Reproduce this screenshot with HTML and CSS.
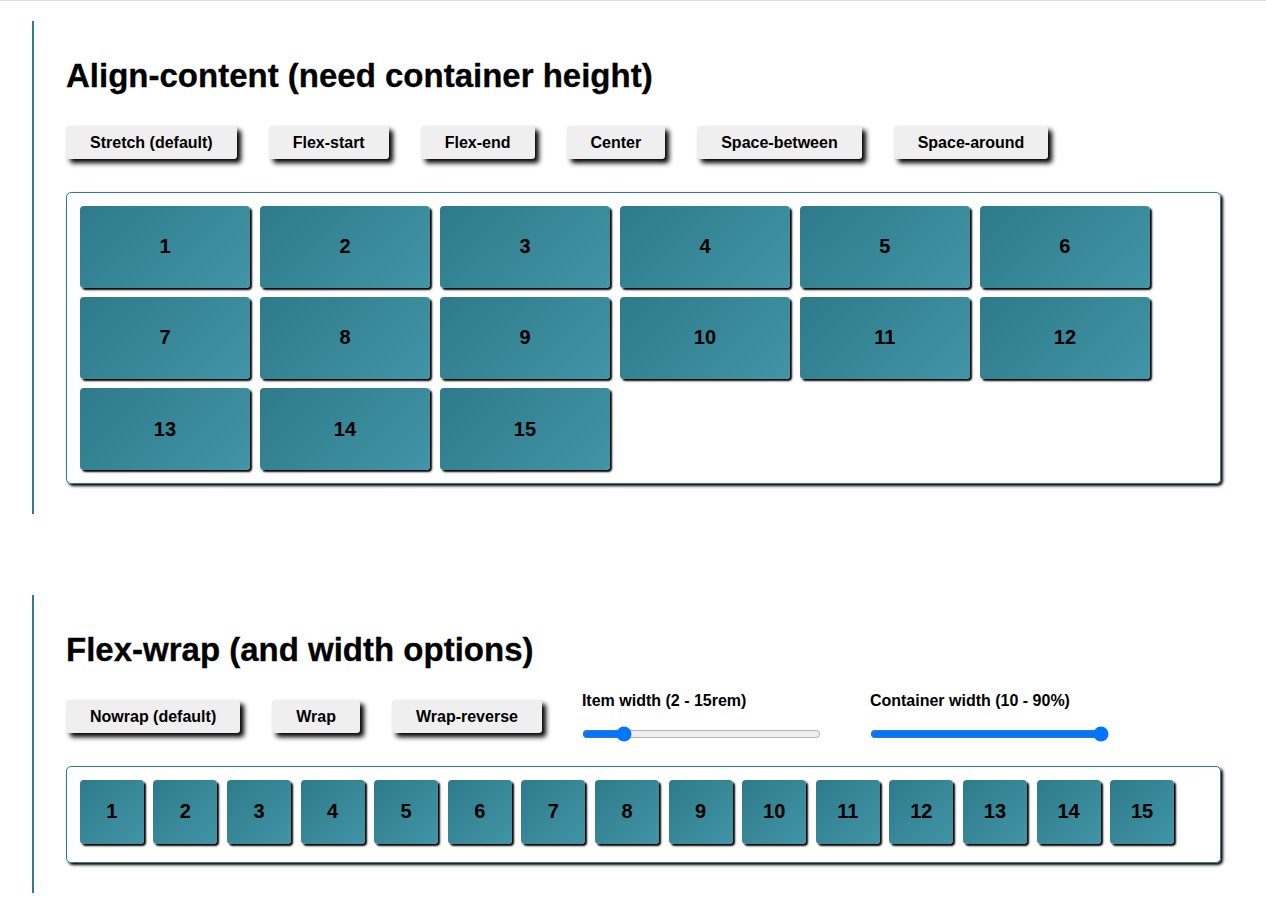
FILE: index.html
```html
<!DOCTYPE html>
<html lang="en">
<head>
<meta charset="utf-8">
<title>Flexbox demos</title>
<link rel="stylesheet" href="styles.css">
</head>
<body>
<section class="demo demo-align">
  <h2 class="demo-title">Align-content (need container height)</h2>
  <div class="controls">
    <button class="btn">Stretch (default)</button>
    <button class="btn">Flex-start</button>
    <button class="btn">Flex-end</button>
    <button class="btn">Center</button>
    <button class="btn">Space-between</button>
    <button class="btn">Space-around</button>
  </div>
  <div class="box box-align">
    <div class="item item-wide">1</div>
    <div class="item item-wide">2</div>
    <div class="item item-wide">3</div>
    <div class="item item-wide">4</div>
    <div class="item item-wide">5</div>
    <div class="item item-wide">6</div>
    <div class="item item-wide">7</div>
    <div class="item item-wide">8</div>
    <div class="item item-wide">9</div>
    <div class="item item-wide">10</div>
    <div class="item item-wide">11</div>
    <div class="item item-wide">12</div>
    <div class="item item-wide">13</div>
    <div class="item item-wide">14</div>
    <div class="item item-wide">15</div>
  </div>
</section>

<section class="demo demo-wrap">
  <h2 class="demo-title demo-title-tight">Flex-wrap (and width options)</h2>
  <div class="controls controls-sliders">
    <button class="btn">Nowrap (default)</button>
    <button class="btn">Wrap</button>
    <button class="btn">Wrap-reverse</button>
    <div class="slider-group slider-item">
      <label class="slider-label" for="itemWidth">Item width (2 - 15rem)</label>
      <input class="slider" id="itemWidth" type="range" min="2" max="15" step="1" value="4">
    </div>
    <div class="slider-group slider-container">
      <label class="slider-label" for="containerWidth">Container width (10 - 90%)</label>
      <input class="slider" id="containerWidth" type="range" min="10" max="90" step="1" value="90">
    </div>
  </div>
  <div class="box box-wrap">
    <div class="item item-square">1</div>
    <div class="item item-square">2</div>
    <div class="item item-square">3</div>
    <div class="item item-square">4</div>
    <div class="item item-square">5</div>
    <div class="item item-square">6</div>
    <div class="item item-square">7</div>
    <div class="item item-square">8</div>
    <div class="item item-square">9</div>
    <div class="item item-square">10</div>
    <div class="item item-square">11</div>
    <div class="item item-square">12</div>
    <div class="item item-square">13</div>
    <div class="item item-square">14</div>
    <div class="item item-square">15</div>
  </div>
</section>
</body>
</html>
```

FILE: styles.css
```css
html, body {
  margin: 0;
  padding: 0;
}

body {
  border-top: 1px solid #dedede;
  font-family: "Liberation Sans", Arial, sans-serif;
  color: #000;
  background: #fff;
  padding-top: 20px;
}

.demo {
  margin-left: 32px;
  border-left: 2px solid #2f7d8b;
  padding: 36px 45px 30px 32px;
}

.demo-wrap {
  margin-top: 81px;
}

.demo-title {
  margin: 0 0 31px 0;
  font-size: 33px;
  font-weight: bold;
  line-height: 38px;
  -webkit-text-stroke: 0.3px #000;
}

.demo-title-tight {
  margin-bottom: 21px;
}

.controls {
  display: flex;
  align-items: center;
  margin-bottom: 33px;
}

.controls-sliders {
  margin-bottom: 24px;
}

.btn {
  font-family: "Liberation Sans", Arial, sans-serif;
  font-size: 16px;
  font-weight: bold;
  line-height: 19px;
  color: #000;
  background: #efefef;
  border: none;
  border-radius: 3px;
  padding: 7px 24px;
  margin: 0 32px 0 0;
  box-shadow: 4px 4px 5px #000;
  cursor: pointer;
}

.slider-group {
  display: flex;
  flex-direction: column;
}

.slider-item {
  margin-left: 8px;
}

.slider-container {
  margin-left: 49px;
}

.slider-label {
  font-size: 16px;
  font-weight: bold;
  line-height: 18px;
  padding-top: 2px;
}

.slider {
  width: 239px;
  height: 16px;
  margin: 16px 0 0 0;
  accent-color: #0075ff;
}

.box {
  display: flex;
  flex-wrap: wrap;
  align-content: stretch;
  border: 1px solid #2f7d8b;
  border-radius: 5px;
  padding: 8px;
  box-shadow: 2px 2px 3px #000;
}

.box-align {
  height: 292px;
  box-sizing: border-box;
}

.box-wrap {
  flex-wrap: nowrap;
  padding-bottom: 13px;
}

.item {
  display: flex;
  align-items: center;
  justify-content: center;
  margin: 4.8px;
  border-radius: 4px;
  background: linear-gradient(135deg, #2e7a8a 0%, #4195a6 100%);
  box-shadow: 2px 2px 2px #000;
  font-size: 20px;
  font-weight: bold;
  color: #000;
}

.item-wide {
  width: 170.4px;
}

.item-square {
  width: 64px;
  height: 64px;
  flex-shrink: 0;
}
```
